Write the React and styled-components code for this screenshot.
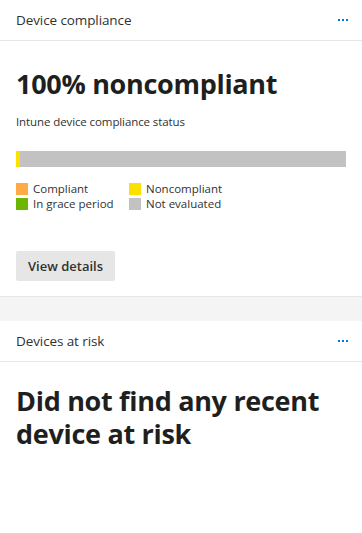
import React from 'react';
import styled, { createGlobalStyle } from 'styled-components';

const GlobalStyle = createGlobalStyle`
  html, body {
    margin: 0;
    padding: 0;
    background: #f4f4f4;
    font-family: "Open Sans", "Noto Sans", sans-serif;
    color: #323130;
  }
`;

const Page = styled.div`
  display: flex;
  flex-direction: column;
  gap: 24px;
  width: 362px;
`;

const Card = styled.section`
  background: #ffffff;
  border-bottom: 1px solid #e6e6e6;
  min-height: ${(p) => p.$minHeight || 0}px;
  box-sizing: border-box;
`;

const CardHeader = styled.header`
  display: flex;
  align-items: center;
  justify-content: space-between;
  height: 41px;
  padding: 0 14px 0 16px;
  border-bottom: 1px solid #e6e6e6;
  box-sizing: border-box;
`;

const CardTitle = styled.h2`
  margin: 0;
  font-size: 13.5px;
  font-weight: 400;
  color: #323130;
  letter-spacing: -0.1px;
`;

const MoreButton = styled.button`
  border: 0;
  background: none;
  padding: 0;
  display: flex;
  gap: 2px;
  cursor: pointer;
`;

const Dot = styled.span`
  width: 2px;
  height: 2px;
  background: #0078d4;
`;

const CardBody = styled.div`
  padding: ${(p) => p.$top || 26}px 16px 15px;
`;

const BigText = styled.h1`
  margin: 0;
  font-size: 27px;
  font-weight: 700;
  line-height: 33px;
  color: #201f1e;
  letter-spacing: -0.3px;
`;

const Subtitle = styled.p`
  margin: 14px 0 0;
  font-size: 11.5px;
  color: #323130;
  letter-spacing: -0.1px;
`;

const Bar = styled.div`
  display: flex;
  height: 16px;
  margin-top: 22px;
  background: #c2c2c2;
`;

const Segment = styled.div`
  background: ${(p) => p.$color};
  height: 100%;
`;

const Legend = styled.div`
  display: grid;
  grid-template-columns: 113px auto;
  margin-top: 14px;
`;

const LegendItem = styled.div`
  display: flex;
  align-items: center;
  gap: 5px;
  height: 15px;
  font-size: 11.5px;
  line-height: 14px;
  color: #323130;
`;

const Swatch = styled.span`
  width: 12px;
  height: 12px;
  background: ${(p) => p.$color};
  flex-shrink: 0;
`;

const Button = styled.button`
  margin-top: 40px;
  height: 30px;
  padding: 0 12px;
  border: 0;
  border-radius: 2px;
  background: #e6e6e6;
  font-family: inherit;
  font-size: 13px;
  font-weight: 600;
  color: #323130;
  cursor: pointer;
`;

const legend = [
  { label: 'Compliant', color: '#ffaa44' },
  { label: 'Noncompliant', color: '#fce100' },
  { label: 'In grace period', color: '#6bb700' },
  { label: 'Not evaluated', color: '#c2c2c2' },
];

const More = () => (
  <MoreButton aria-label="More">
    <Dot />
    <Dot />
    <Dot />
  </MoreButton>
);

export default function App() {
  const noncompliantPct = 1.2;
  return (
    <>
      <GlobalStyle />
      <Page>
        <Card>
          <CardHeader>
            <CardTitle>Device compliance</CardTitle>
            <More />
          </CardHeader>
          <CardBody>
            <BigText>100% noncompliant</BigText>
            <Subtitle>Intune device compliance status</Subtitle>
            <Bar>
              <Segment $color="#fce100" style={{ width: `${noncompliantPct}%` }} />
            </Bar>
            <Legend>
              {legend.map((l) => (
                <LegendItem key={l.label}>
                  <Swatch $color={l.color} />
                  {l.label}
                </LegendItem>
              ))}
            </Legend>
            <Button>View details</Button>
          </CardBody>
        </Card>
        <Card $minHeight={220}>
          <CardHeader>
            <CardTitle>Devices at risk</CardTitle>
            <More />
          </CardHeader>
          <CardBody $top={22}>
            <BigText>Did not find any recent device at risk</BigText>
          </CardBody>
        </Card>
      </Page>
    </>
  );
}
